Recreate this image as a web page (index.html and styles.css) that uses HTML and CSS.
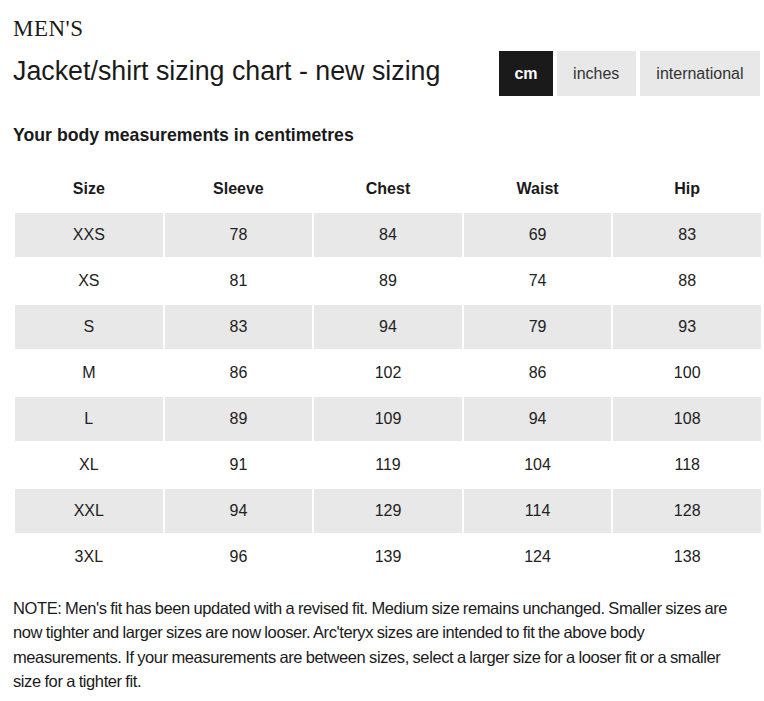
FILE: index.html
```html
<!DOCTYPE html>
<html lang="en">
<head>
<meta charset="utf-8">
<title>Men's sizing chart</title>
<link rel="stylesheet" href="styles.css">
</head>
<body>
<div class="page">
  <header class="top">
    <div class="titles">
      <div class="gender">MEN'S</div>
      <h1 class="title">Jacket/shirt sizing chart - new sizing</h1>
    </div>
    <div class="units">
      <button class="unit active">cm</button>
      <button class="unit">inches</button>
      <button class="unit">international</button>
    </div>
  </header>
  <h2 class="subtitle">Your body measurements in centimetres</h2>
  <table class="chart">
    <thead>
      <tr><th>Size</th><th>Sleeve</th><th>Chest</th><th>Waist</th><th>Hip</th></tr>
    </thead>
    <tbody>
      <tr class="shade"><td>XXS</td><td>78</td><td>84</td><td>69</td><td>83</td></tr>
      <tr><td>XS</td><td>81</td><td>89</td><td>74</td><td>88</td></tr>
      <tr class="shade"><td>S</td><td>83</td><td>94</td><td>79</td><td>93</td></tr>
      <tr><td>M</td><td>86</td><td>102</td><td>86</td><td>100</td></tr>
      <tr class="shade"><td>L</td><td>89</td><td>109</td><td>94</td><td>108</td></tr>
      <tr><td>XL</td><td>91</td><td>119</td><td>104</td><td>118</td></tr>
      <tr class="shade"><td>XXL</td><td>94</td><td>129</td><td>114</td><td>128</td></tr>
      <tr><td>3XL</td><td>96</td><td>139</td><td>124</td><td>138</td></tr>
    </tbody>
  </table>
  <p class="note">NOTE: Men's fit has been updated with a revised fit. Medium size remains unchanged. Smaller sizes are now tighter and larger sizes are now looser. Arc'teryx sizes are intended to fit the above body measurements. If your measurements are between sizes, select a larger size for a looser fit or a smaller size for a tighter fit.</p>
</div>
</body>
</html>
```

FILE: styles.css
```css
html, body {
  margin: 0;
  padding: 0;
  background: #ffffff;
}

.page {
  padding: 15px 0 0 13px;
  font-family: "Liberation Sans", Arial, sans-serif;
  color: #1a1a1a;
}

.top {
  display: flex;
  justify-content: space-between;
  align-items: flex-start;
  padding-right: 4px;
}

.gender {
  font-family: "Liberation Serif", "Times New Roman", serif;
  font-size: 23px;
  line-height: 28px;
  letter-spacing: 0.5px;
}

.title {
  margin: 12px 0 0;
  font-size: 26.8px;
  font-weight: 400;
  line-height: 32px;
  letter-spacing: 0;
}

.units {
  display: flex;
  gap: 4px;
  margin-top: 36px;
}

.unit {
  border: 0;
  height: 45px;
  padding: 0 16.5px;
  background: #e8e8e8;
  color: #333333;
  font-family: "Liberation Sans", Arial, sans-serif;
  font-size: 16px;
  cursor: pointer;
}

.unit.active {
  padding: 0 15px;
  background: #1a1a1a;
  color: #ffffff;
  font-weight: 700;
}

.subtitle {
  margin: 29px 0 0;
  font-size: 17.7px;
  font-weight: 700;
  line-height: 20px;
}

.chart {
  margin: 20px 0 0;
  width: 750px;
  border-collapse: separate;
  border-spacing: 2px;
  table-layout: fixed;
}

.chart th,
.chart td {
  height: 44px;
  padding: 0;
  text-align: center;
  vertical-align: middle;
  font-size: 16px;
}

.chart th {
  font-weight: 700;
}

.chart td {
  color: #222222;
}

.shade td {
  background: #e8e8e8;
}

.note {
  margin: 15px 0 0;
  padding-right: 16px;
  font-size: 16.5px;
  line-height: 24.3px;
  color: #1a1a1a;
  letter-spacing: -0.4px;
  word-spacing: -0.5px;
}
```
